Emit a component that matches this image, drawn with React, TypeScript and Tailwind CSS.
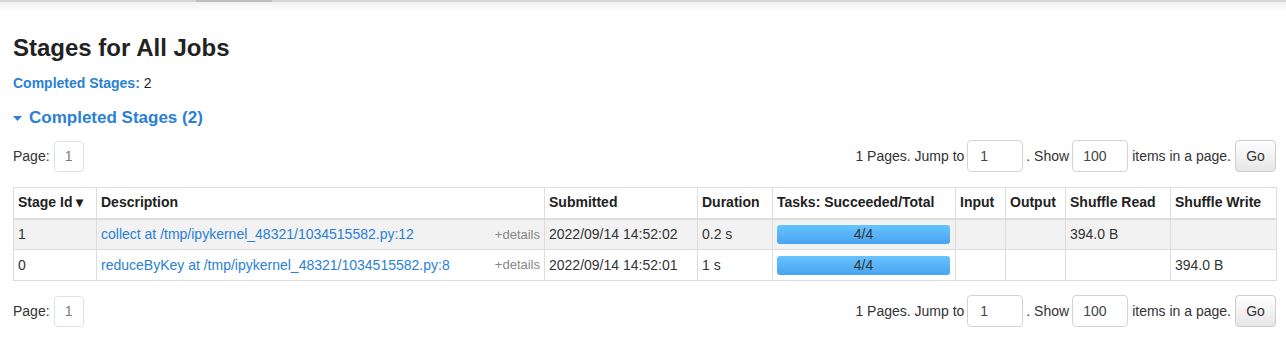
import React from 'react';

const font = { fontFamily: '"Liberation Sans", Arial, Helvetica, sans-serif' };

const stages = [
  {
    id: '1',
    desc: 'collect at /tmp/ipykernel_48321/1034515582.py:12',
    submitted: '2022/09/14 14:52:02',
    duration: '0.2 s',
    tasks: '4/4',
    read: '394.0 B',
    write: '',
  },
  {
    id: '0',
    desc: 'reduceByKey at /tmp/ipykernel_48321/1034515582.py:8',
    submitted: '2022/09/14 14:52:01',
    duration: '1 s',
    tasks: '4/4',
    read: '',
    write: '394.0 B',
  },
];

const headers = [
  'Stage Id ▾',
  'Description',
  'Submitted',
  'Duration',
  'Tasks: Succeeded/Total',
  'Input',
  'Output',
  'Shuffle Read',
  'Shuffle Write',
];

const widths = ['w-[83px]', 'w-[448px]', 'w-[153px]', 'w-[75px]', 'w-[183px]', 'w-[50px]', 'w-[60px]', 'w-[105px]', 'w-[106px]'];

function Pager() {
  return (
    <div className="flex items-center justify-between h-[32px] text-[14px] text-[#333]">
      <div className="flex items-center">
        <span>Page:</span>
        <span className="ml-[4px] w-[30px] h-[31px] flex items-center justify-center border border-[#dee2e6] rounded-[4px] text-[#6d7f92]">
          1
        </span>
      </div>
      <div className="flex items-center">
        <span>1 Pages. Jump to</span>
        <span className="ml-[3px] w-[56px] h-[32px] flex items-center pl-[12px] border border-[#d3d3d3] rounded-[4px] text-[#444]">1</span>
        <span className="ml-[3px]">. Show</span>
        <span className="ml-[3px] w-[56px] h-[32px] flex items-center pl-[10px] border border-[#d3d3d3] rounded-[4px] text-[#444]">100</span>
        <span className="ml-[4px]">items in a page.</span>
        <span className="ml-[4px] w-[41px] h-[32px] flex items-center justify-center border border-[#ccc] rounded-[4px] bg-gradient-to-b from-white to-[#e6e6e6] text-[#333]">
          Go
        </span>
      </div>
    </div>
  );
}

export default function App() {
  return (
    <div className="bg-white min-h-[341px]" style={font}>
      {/* navbar edge */}
      <div className="h-[2px] bg-[#d6d6d6] flex">
        <div className="ml-[196px] w-[76px] h-[2px] bg-[#bdbdbd]" />
      </div>
      <div className="h-[10px] bg-gradient-to-b from-[#f1f1f1] to-white" />

      <div className="pl-[13px] pr-[10px]">
        <h3 className="mt-[22px] text-[24px] leading-[28px] font-bold text-[#222]">Stages for All Jobs</h3>

        <div className="mt-[11px] text-[14px] leading-[20px] text-[#222]">
          <span className="font-bold text-[#2a80d6]">Completed Stages:</span> 2
        </div>

        <div className="mt-[13px] flex items-center h-[24px] text-[17px] font-bold text-[#2a80d6]">
          <svg width="9" height="5" viewBox="0 0 9 5" className="mr-[7px] mt-[1px]">
            <path d="M0 0 L9 0 L4.5 5 Z" fill="#2a80d6" />
          </svg>
          Completed Stages (2)
        </div>

        <div className="mt-[10px]">
          <Pager />
        </div>

        <table className="mt-[15px] w-[1263px] table-fixed border-collapse text-[14px] text-[#333]">
          <colgroup>
            {widths.map((w, i) => (
              <col key={i} className={w} />
            ))}
          </colgroup>
          <thead>
            <tr className="h-[31px]">
              {headers.map((h) => (
                <th key={h} className="border border-[#ddd] border-b-2 pl-[4px] pr-[5px] text-left font-bold text-[#222] whitespace-nowrap">
                  {h}
                </th>
              ))}
            </tr>
          </thead>
          <tbody>
            {stages.map((s, i) => (
              <tr key={s.id} className={`h-[31px] ${i === 0 ? 'bg-[#f2f2f2]' : 'bg-white'}`}>
                <td className="border border-[#ddd] pl-[4px] pr-[5px]">{s.id}</td>
                <td className="border border-[#ddd] pl-[4px] pr-[5px]">
                  <div className="flex items-center justify-between">
                    <span className="text-[#2a80d6]">{s.desc}</span>
                    <span className="text-[13px] text-[#888] mr-[-1px]">+details</span>
                  </div>
                </td>
                <td className="border border-[#ddd] pl-[4px] pr-[5px] whitespace-nowrap">{s.submitted}</td>
                <td className="border border-[#ddd] pl-[4px] pr-[5px]">{s.duration}</td>
                <td className="border border-[#ddd] pl-[4px] pr-[5px]">
                  <div className="h-[19px] rounded-[3px] bg-gradient-to-b from-[#67c3ff] to-[#4aa4ef] flex items-center justify-center text-[#333]">
                    {s.tasks}
                  </div>
                </td>
                <td className="border border-[#ddd] pl-[4px] pr-[5px]"></td>
                <td className="border border-[#ddd] pl-[4px] pr-[5px]"></td>
                <td className="border border-[#ddd] pl-[4px] pr-[5px]">{s.read}</td>
                <td className="border border-[#ddd] pl-[4px] pr-[5px]">{s.write}</td>
              </tr>
            ))}
          </tbody>
        </table>

        <div className="mt-[14px]">
          <Pager />
        </div>
      </div>
    </div>
  );
}
